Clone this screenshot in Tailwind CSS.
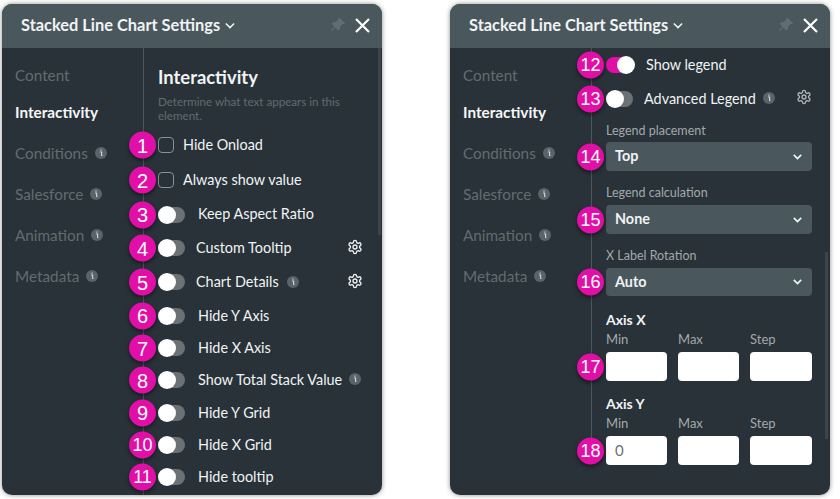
<!DOCTYPE html>
<html lang="en">
<head>
<meta charset="UTF-8">
<title>Stacked Line Chart Settings</title>
<script src="https://cdn.jsdelivr.net/npm/@tailwindcss/browser@4"></script>
</head>
<body class="bg-white font-['Lato',sans-serif] text-[14.400px] text-[#f1f3f4] overflow-hidden">
<div class="w-[840px] h-[499px] flex pl-[2px] pt-[4px] gap-[68px]">

  <!-- Left panel -->
  <div class="relative w-[380px] h-[491px] rounded-[10px] bg-[#283238] shadow-[0_0_5px_rgba(0,0,0,0.45)] flex flex-col">
    <div class="h-[44px] shrink-0 rounded-t-[10px] bg-[#4a575d] flex items-center pl-[19px] pr-[12px] pb-[2px]">
      <span class="text-[16.400px] font-bold">Stacked Line Chart Settings</span>
      <svg class="w-[10px] h-[7px] ml-[5px]" viewBox="0 0 12 8" fill="none" stroke="#f1f3f4" stroke-width="1.8"><path d="M1 1.5l5 5 5-5"/></svg>
      <svg class="w-[15px] h-[15px] ml-auto" viewBox="0 0 16 16" fill="#636e73"><path d="M9.8.6a.7.7 0 0 1 1.1-.2l4.7 4.7a.7.7 0 0 1-.2 1.1c-.6.3-1.2.3-1.6.2l-.3-.1-3 3c.1.4.2.9.1 1.5-.1.8-.5 1.6-1.1 2.2a.7.7 0 0 1-1 0L5.700 10l-3.500 3.500-1.200.5.500-1.200L5 9.300 2.200 6.500a.7.7 0 0 1 0-1c.6-.6 1.400-1 2.200-1.100.6-.1 1.100 0 1.500.1l3-3-.1-.3c-.1-.4-.1-1 .2-1.600z"/></svg>
      <svg class="w-[15px] h-[15px] ml-[10px]" viewBox="0 0 15 15" fill="none" stroke="#ffffff" stroke-width="2.2"><path d="M1 1l13 13M14 1L1 14"/></svg>
    </div>
    <div class="flex-1 flex min-h-0">
      <nav class="w-[142px] shrink-0 border-r border-[#4c565b] pl-[13px] text-[15.300px] text-[#626c71]">
        <div class="h-[24px] mt-[15px] flex items-center">Content</div>
        <div class="h-[24px] mt-[13px] flex items-center font-bold text-[#f7f8f8]">Interactivity</div>
        <div class="h-[24px] mt-[17px] flex items-center gap-[7px]">Conditions
          <svg class="w-[12px] h-[12px]" viewBox="0 0 12 12"><circle cx="6" cy="6" r="6" fill="#59646a"/><path d="M5 5h1.600v3.500H7.400M6 2.500v1.200" stroke="#c9cfd2" stroke-width="1.200" fill="none"/></svg>
        </div>
        <div class="h-[24px] mt-[17px] flex items-center gap-[7px]">Salesforce
          <svg class="w-[12px] h-[12px]" viewBox="0 0 12 12"><circle cx="6" cy="6" r="6" fill="#59646a"/><path d="M5 5h1.600v3.500H7.400M6 2.500v1.200" stroke="#c9cfd2" stroke-width="1.200" fill="none"/></svg>
        </div>
        <div class="h-[24px] mt-[17px] flex items-center gap-[7px]">Animation
          <svg class="w-[12px] h-[12px]" viewBox="0 0 12 12"><circle cx="6" cy="6" r="6" fill="#59646a"/><path d="M5 5h1.600v3.500H7.400M6 2.500v1.200" stroke="#c9cfd2" stroke-width="1.200" fill="none"/></svg>
        </div>
        <div class="h-[24px] mt-[17px] flex items-center gap-[7px]">Metadata
          <svg class="w-[12px] h-[12px]" viewBox="0 0 12 12"><circle cx="6" cy="6" r="6" fill="#59646a"/><path d="M5 5h1.600v3.500H7.400M6 2.500v1.200" stroke="#c9cfd2" stroke-width="1.200" fill="none"/></svg>
        </div>
      </nav>
      <div class="flex-1 pl-[14px]">
        <h2 class="text-[18.400px] font-bold leading-[24px] mt-[17px]">Interactivity</h2>
        <p class="text-[11.600px] leading-[14px] text-[#626c71] mt-[6px] w-[200px]">Determine what text appears in this element.</p>
        <div class="mt-[5px]">
          <div class="relative h-[34px] flex items-center">
            <span class="absolute left-[-29px] top-1/2 -translate-y-1/2 w-[27px] h-[27px] rounded-full bg-[#e10fa8] shadow-[0_2px_4px_rgba(0,0,0,0.5)] flex items-center justify-center font-['Liberation_Sans',sans-serif] text-[20px] text-white">1</span>
            <span class="w-[16px] h-[16px] rounded-[4px] border border-[#8b9195]"></span>
            <span class="ml-[9px] mb-[1px]">Hide Onload</span>
          </div>
          <div class="relative h-[36px] flex items-center">
            <span class="absolute left-[-29px] top-1/2 -translate-y-1/2 w-[27px] h-[27px] rounded-full bg-[#e10fa8] shadow-[0_2px_4px_rgba(0,0,0,0.5)] flex items-center justify-center font-['Liberation_Sans',sans-serif] text-[20px] text-white">2</span>
            <span class="w-[16px] h-[16px] rounded-[4px] border border-[#8b9195]"></span>
            <span class="ml-[9px] mb-[1px]">Always show value</span>
          </div>
          <div class="relative h-[33px] flex items-center">
            <span class="absolute left-[-29px] top-1/2 -translate-y-1/2 w-[27px] h-[27px] rounded-full bg-[#e10fa8] shadow-[0_2px_4px_rgba(0,0,0,0.5)] flex items-center justify-center font-['Liberation_Sans',sans-serif] text-[20px] text-white">3</span>
            <span class="w-[27px] h-[16px] rounded-full bg-[#6b7175] flex items-center"><span class="w-[18px] h-[18px] rounded-full bg-white"></span></span>
            <span class="ml-[13px] mb-[1px]">Keep Aspect Ratio</span>
          </div>
          <div class="relative h-[34px] flex items-center">
            <span class="absolute left-[-29px] top-1/2 -translate-y-1/2 w-[27px] h-[27px] rounded-full bg-[#e10fa8] shadow-[0_2px_4px_rgba(0,0,0,0.5)] flex items-center justify-center font-['Liberation_Sans',sans-serif] text-[20px] text-white">4</span>
            <span class="w-[27px] h-[16px] rounded-full bg-[#6b7175] flex items-center"><span class="w-[18px] h-[18px] rounded-full bg-white"></span></span>
            <span class="ml-[11px] mb-[1px]">Custom Tooltip</span>
            <svg class="w-[16px] h-[16px] ml-auto mr-[15px] -mt-[2px]" viewBox="0 0 24 24" fill="none" stroke="#f1f3f4" stroke-width="2"><path d="M12.220 2h-.440a2 2 0 0 0-2 2v.180a2 2 0 0 1-1 1.730l-.430.250a2 2 0 0 1-2 0l-.150-.080a2 2 0 0 0-2.730.730l-.220.380a2 2 0 0 0 .730 2.730l.150.100a2 2 0 0 1 1 1.720v.510a2 2 0 0 1-1 1.740l-.150.090a2 2 0 0 0-.730 2.730l.220.380a2 2 0 0 0 2.730.730l.150-.080a2 2 0 0 1 2 0l.430.250a2 2 0 0 1 1 1.730V20a2 2 0 0 0 2 2h.440a2 2 0 0 0 2-2v-.180a2 2 0 0 1 1-1.730l.430-.250a2 2 0 0 1 2 0l.150.080a2 2 0 0 0 2.730-.730l.220-.390a2 2 0 0 0-.730-2.730l-.150-.080a2 2 0 0 1-1-1.740v-.500a2 2 0 0 1 1-1.740l.150-.090a2 2 0 0 0 .730-2.730l-.220-.380a2 2 0 0 0-2.730-.730l-.150.080a2 2 0 0 1-2 0l-.430-.250a2 2 0 0 1-1-1.730V4a2 2 0 0 0-2-2z"/><circle cx="12" cy="12" r="3"/></svg>
          </div>
          <div class="relative h-[34px] flex items-center">
            <span class="absolute left-[-29px] top-1/2 -translate-y-1/2 w-[27px] h-[27px] rounded-full bg-[#e10fa8] shadow-[0_2px_4px_rgba(0,0,0,0.5)] flex items-center justify-center font-['Liberation_Sans',sans-serif] text-[20px] text-white">5</span>
            <span class="w-[27px] h-[16px] rounded-full bg-[#6b7175] flex items-center"><span class="w-[18px] h-[18px] rounded-full bg-white"></span></span>
            <span class="ml-[11px] mb-[1px]">Chart Details</span>
            <svg class="w-[12px] h-[12px] ml-[8px] -mt-[1px]" viewBox="0 0 12 12"><circle cx="6" cy="6" r="6" fill="#59646a"/><path d="M5 5h1.600v3.500H7.400M6 2.500v1.200" stroke="#c9cfd2" stroke-width="1.200" fill="none"/></svg>
            <svg class="w-[16px] h-[16px] ml-auto mr-[15px] -mt-[2px]" viewBox="0 0 24 24" fill="none" stroke="#f1f3f4" stroke-width="2"><path d="M12.220 2h-.440a2 2 0 0 0-2 2v.180a2 2 0 0 1-1 1.730l-.430.250a2 2 0 0 1-2 0l-.150-.080a2 2 0 0 0-2.730.730l-.220.380a2 2 0 0 0 .730 2.730l.150.100a2 2 0 0 1 1 1.720v.510a2 2 0 0 1-1 1.740l-.150.090a2 2 0 0 0-.730 2.730l.220.380a2 2 0 0 0 2.730.730l.150-.080a2 2 0 0 1 2 0l.430.250a2 2 0 0 1 1 1.730V20a2 2 0 0 0 2 2h.440a2 2 0 0 0 2-2v-.180a2 2 0 0 1 1-1.730l.430-.250a2 2 0 0 1 2 0l.150.080a2 2 0 0 0 2.730-.730l.220-.390a2 2 0 0 0-.730-2.730l-.150-.080a2 2 0 0 1-1-1.740v-.500a2 2 0 0 1 1-1.740l.150-.090a2 2 0 0 0 .730-2.730l-.220-.380a2 2 0 0 0-2.730-.730l-.150.080a2 2 0 0 1-2 0l-.430-.250a2 2 0 0 1-1-1.730V4a2 2 0 0 0-2-2z"/><circle cx="12" cy="12" r="3"/></svg>
          </div>
          <div class="relative h-[33px] flex items-center">
            <span class="absolute left-[-29px] top-1/2 -translate-y-1/2 w-[27px] h-[27px] rounded-full bg-[#e10fa8] shadow-[0_2px_4px_rgba(0,0,0,0.5)] flex items-center justify-center font-['Liberation_Sans',sans-serif] text-[20px] text-white">6</span>
            <span class="w-[27px] h-[16px] rounded-full bg-[#6b7175] flex items-center"><span class="w-[18px] h-[18px] rounded-full bg-white"></span></span>
            <span class="ml-[13px]">Hide Y Axis</span>
          </div>
          <div class="relative h-[32px] flex items-center">
            <span class="absolute left-[-29px] top-1/2 -translate-y-1/2 w-[27px] h-[27px] rounded-full bg-[#e10fa8] shadow-[0_2px_4px_rgba(0,0,0,0.5)] flex items-center justify-center font-['Liberation_Sans',sans-serif] text-[20px] text-white">7</span>
            <span class="w-[27px] h-[16px] rounded-full bg-[#6b7175] flex items-center"><span class="w-[18px] h-[18px] rounded-full bg-white"></span></span>
            <span class="ml-[13px]">Hide X Axis</span>
          </div>
          <div class="relative h-[32px] flex items-center">
            <span class="absolute left-[-29px] top-1/2 -translate-y-1/2 w-[27px] h-[27px] rounded-full bg-[#e10fa8] shadow-[0_2px_4px_rgba(0,0,0,0.5)] flex items-center justify-center font-['Liberation_Sans',sans-serif] text-[20px] text-white">8</span>
            <span class="w-[27px] h-[16px] rounded-full bg-[#6b7175] flex items-center"><span class="w-[18px] h-[18px] rounded-full bg-white"></span></span>
            <span class="ml-[13px]">Show Total Stack Value</span>
            <svg class="w-[12px] h-[12px] ml-[7px] -mt-[2px]" viewBox="0 0 12 12"><circle cx="6" cy="6" r="6" fill="#59646a"/><path d="M5 5h1.600v3.500H7.400M6 2.500v1.200" stroke="#c9cfd2" stroke-width="1.200" fill="none"/></svg>
          </div>
          <div class="relative h-[33px] flex items-center">
            <span class="absolute left-[-29px] top-1/2 -translate-y-1/2 w-[27px] h-[27px] rounded-full bg-[#e10fa8] shadow-[0_2px_4px_rgba(0,0,0,0.5)] flex items-center justify-center font-['Liberation_Sans',sans-serif] text-[20px] text-white">9</span>
            <span class="w-[27px] h-[16px] rounded-full bg-[#6b7175] flex items-center"><span class="w-[18px] h-[18px] rounded-full bg-white"></span></span>
            <span class="ml-[13px]">Hide Y Grid</span>
          </div>
          <div class="relative h-[32px] flex items-center">
            <span class="absolute left-[-29px] top-1/2 -translate-y-1/2 w-[27px] h-[27px] rounded-full bg-[#e10fa8] shadow-[0_2px_4px_rgba(0,0,0,0.5)] flex items-center justify-center font-['Liberation_Sans',sans-serif] text-[18px] text-white">10</span>
            <span class="w-[27px] h-[16px] rounded-full bg-[#6b7175] flex items-center"><span class="w-[18px] h-[18px] rounded-full bg-white"></span></span>
            <span class="ml-[13px]">Hide X Grid</span>
          </div>
          <div class="relative h-[32px] flex items-center">
            <span class="absolute left-[-29px] top-1/2 -translate-y-1/2 w-[27px] h-[27px] rounded-full bg-[#e10fa8] shadow-[0_2px_4px_rgba(0,0,0,0.5)] flex items-center justify-center font-['Liberation_Sans',sans-serif] text-[18px] text-white">11</span>
            <span class="w-[27px] h-[16px] rounded-full bg-[#6b7175] flex items-center"><span class="w-[18px] h-[18px] rounded-full bg-white"></span></span>
            <span class="ml-[13px]">Hide tooltip</span>
          </div>
        </div>
      </div>
      <div class="w-[3px] h-[187px] mr-[1px] bg-[#3b454b]"></div>
    </div>
  </div>

  <!-- Right panel -->
  <div class="relative w-[380px] h-[491px] rounded-[10px] bg-[#283238] shadow-[0_0_5px_rgba(0,0,0,0.45)] flex flex-col">
    <div class="h-[44px] shrink-0 rounded-t-[10px] bg-[#4a575d] flex items-center pl-[19px] pr-[12px] pb-[2px]">
      <span class="text-[16.400px] font-bold">Stacked Line Chart Settings</span>
      <svg class="w-[10px] h-[7px] ml-[5px]" viewBox="0 0 12 8" fill="none" stroke="#f1f3f4" stroke-width="1.8"><path d="M1 1.5l5 5 5-5"/></svg>
      <svg class="w-[15px] h-[15px] ml-auto" viewBox="0 0 16 16" fill="#636e73"><path d="M9.8.6a.7.7 0 0 1 1.1-.2l4.7 4.7a.7.7 0 0 1-.2 1.1c-.6.3-1.2.3-1.6.2l-.3-.1-3 3c.1.4.2.9.1 1.5-.1.8-.5 1.6-1.1 2.2a.7.7 0 0 1-1 0L5.700 10l-3.500 3.500-1.200.5.500-1.200L5 9.300 2.200 6.500a.7.7 0 0 1 0-1c.6-.6 1.400-1 2.200-1.100.6-.1 1.100 0 1.500.1l3-3-.1-.3c-.1-.4-.1-1 .2-1.600z"/></svg>
      <svg class="w-[15px] h-[15px] ml-[10px]" viewBox="0 0 15 15" fill="none" stroke="#ffffff" stroke-width="2.2"><path d="M1 1l13 13M14 1L1 14"/></svg>
    </div>
    <div class="flex-1 flex min-h-0">
      <nav class="w-[142px] h-[402px] shrink-0 border-r border-[#4c565b] pl-[13px] text-[15.300px] text-[#626c71]">
        <div class="h-[24px] mt-[15px] flex items-center">Content</div>
        <div class="h-[24px] mt-[13px] flex items-center font-bold text-[#f7f8f8]">Interactivity</div>
        <div class="h-[24px] mt-[17px] flex items-center gap-[7px]">Conditions
          <svg class="w-[12px] h-[12px]" viewBox="0 0 12 12"><circle cx="6" cy="6" r="6" fill="#59646a"/><path d="M5 5h1.600v3.500H7.400M6 2.500v1.200" stroke="#c9cfd2" stroke-width="1.200" fill="none"/></svg>
        </div>
        <div class="h-[24px] mt-[17px] flex items-center gap-[7px]">Salesforce
          <svg class="w-[12px] h-[12px]" viewBox="0 0 12 12"><circle cx="6" cy="6" r="6" fill="#59646a"/><path d="M5 5h1.600v3.500H7.400M6 2.500v1.200" stroke="#c9cfd2" stroke-width="1.200" fill="none"/></svg>
        </div>
        <div class="h-[24px] mt-[17px] flex items-center gap-[7px]">Animation
          <svg class="w-[12px] h-[12px]" viewBox="0 0 12 12"><circle cx="6" cy="6" r="6" fill="#59646a"/><path d="M5 5h1.600v3.500H7.400M6 2.500v1.200" stroke="#c9cfd2" stroke-width="1.200" fill="none"/></svg>
        </div>
        <div class="h-[24px] mt-[17px] flex items-center gap-[7px]">Metadata
          <svg class="w-[12px] h-[12px]" viewBox="0 0 12 12"><circle cx="6" cy="6" r="6" fill="#59646a"/><path d="M5 5h1.600v3.500H7.400M6 2.500v1.200" stroke="#c9cfd2" stroke-width="1.200" fill="none"/></svg>
        </div>
      </nav>
      <div class="w-[206px] ml-[14px] shrink-0">
        <div class="relative h-[34px] flex items-center">
          <span class="absolute left-[-29px] top-1/2 -translate-y-1/2 w-[27px] h-[27px] rounded-full bg-[#e10fa8] shadow-[0_2px_4px_rgba(0,0,0,0.5)] flex items-center justify-center font-['Liberation_Sans',sans-serif] text-[18px] text-white">12</span>
          <span class="w-[27px] h-[16px] rounded-full bg-[#e10fa8] flex items-center justify-end"><span class="w-[18px] h-[18px] -mr-[2px] rounded-full bg-white"></span></span>
          <span class="ml-[13px]">Show legend</span>
        </div>
        <div class="relative h-[34px] flex items-center">
          <span class="absolute left-[-29px] top-1/2 -translate-y-1/2 w-[27px] h-[27px] rounded-full bg-[#e10fa8] shadow-[0_2px_4px_rgba(0,0,0,0.5)] flex items-center justify-center font-['Liberation_Sans',sans-serif] text-[18px] text-white">13</span>
          <span class="w-[27px] h-[16px] rounded-full bg-[#6b7175] flex items-center"><span class="w-[18px] h-[18px] rounded-full bg-white"></span></span>
          <span class="ml-[11px]">Advanced Legend</span>
          <svg class="w-[12px] h-[12px] ml-[7px] -mt-[2px]" viewBox="0 0 12 12"><circle cx="6" cy="6" r="6" fill="#59646a"/><path d="M5 5h1.600v3.500H7.400M6 2.500v1.200" stroke="#c9cfd2" stroke-width="1.200" fill="none"/></svg>
          <svg class="w-[16px] h-[16px] ml-auto -mt-[4px]" viewBox="0 0 24 24" fill="none" stroke="#aeb4b7" stroke-width="2"><path d="M12.220 2h-.440a2 2 0 0 0-2 2v.180a2 2 0 0 1-1 1.730l-.430.250a2 2 0 0 1-2 0l-.150-.080a2 2 0 0 0-2.730.730l-.220.380a2 2 0 0 0 .730 2.730l.150.100a2 2 0 0 1 1 1.720v.510a2 2 0 0 1-1 1.740l-.150.090a2 2 0 0 0-.730 2.730l.220.380a2 2 0 0 0 2.730.730l.150-.080a2 2 0 0 1 2 0l.430.250a2 2 0 0 1 1 1.730V20a2 2 0 0 0 2 2h.440a2 2 0 0 0 2-2v-.180a2 2 0 0 1 1-1.730l.430-.250a2 2 0 0 1 2 0l.150.080a2 2 0 0 0 2.730-.730l.220-.390a2 2 0 0 0-.730-2.730l-.150-.080a2 2 0 0 1-1-1.740v-.500a2 2 0 0 1 1-1.740l.150-.090a2 2 0 0 0 .730-2.730l-.220-.380a2 2 0 0 0-2.730-.730l-.150.080a2 2 0 0 1-2 0l-.430-.250a2 2 0 0 1-1-1.730V4a2 2 0 0 0-2-2z"/><circle cx="12" cy="12" r="3"/></svg>
        </div>
        <div class="text-[12.500px] leading-[16px] text-[#a3a9ac] mt-[7px]">Legend placement</div>
        <div class="relative h-[29px] mt-[3px] rounded-[4px] bg-[#4a575d] flex items-center pl-[9px] pr-[10px] font-bold">
          <span class="absolute left-[-29px] top-1/2 -translate-y-1/2 w-[27px] h-[27px] rounded-full bg-[#e10fa8] shadow-[0_2px_4px_rgba(0,0,0,0.5)] flex items-center justify-center font-['Liberation_Sans',sans-serif] font-normal text-[18px] text-white">14</span>
          <span class="mb-[2px]">Top</span>
          <svg class="w-[9px] h-[6px] ml-auto" viewBox="0 0 9 6" fill="none" stroke="#f1f3f4" stroke-width="1.700"><path d="M.8.8l3.700 3.700L8.200.8"/></svg>
        </div>
        <div class="text-[12.500px] leading-[16px] text-[#a3a9ac] mt-[14px]">Legend calculation</div>
        <div class="relative h-[29px] mt-[4px] rounded-[4px] bg-[#4a575d] flex items-center pl-[9px] pr-[10px] font-bold">
          <span class="absolute left-[-29px] top-1/2 -translate-y-1/2 w-[27px] h-[27px] rounded-full bg-[#e10fa8] shadow-[0_2px_4px_rgba(0,0,0,0.5)] flex items-center justify-center font-['Liberation_Sans',sans-serif] font-normal text-[18px] text-white">15</span>
          <span class="mb-[2px]">None</span>
          <svg class="w-[9px] h-[6px] ml-auto" viewBox="0 0 9 6" fill="none" stroke="#f1f3f4" stroke-width="1.700"><path d="M.8.8l3.700 3.700L8.200.8"/></svg>
        </div>
        <div class="text-[12.500px] leading-[16px] text-[#a3a9ac] mt-[14px]">X Label Rotation</div>
        <div class="relative h-[28px] mt-[4px] rounded-[4px] bg-[#4a575d] flex items-center pl-[9px] pr-[10px] font-bold">
          <span class="absolute left-[-29px] top-1/2 -translate-y-1/2 w-[27px] h-[27px] rounded-full bg-[#e10fa8] shadow-[0_2px_4px_rgba(0,0,0,0.5)] flex items-center justify-center font-['Liberation_Sans',sans-serif] font-normal text-[18px] text-white">16</span>
          <span>Auto</span>
          <svg class="w-[9px] h-[6px] ml-auto" viewBox="0 0 9 6" fill="none" stroke="#f1f3f4" stroke-width="1.700"><path d="M.8.8l3.700 3.700L8.200.8"/></svg>
        </div>
        <div class="text-[14px] leading-[18px] font-bold mt-[15px]">Axis X</div>
        <div class="grid grid-cols-[61px_61px_62px] gap-x-[11px] text-[13px] leading-[16px] text-[#a3a9ac] mt-[2px]"><span>Min</span><span>Max</span><span>Step</span></div>
        <div class="relative grid grid-cols-[61px_61px_62px] gap-x-[11px] mt-[5px]">
          <span class="absolute left-[-29px] top-1/2 -translate-y-1/2 w-[27px] h-[27px] rounded-full bg-[#e10fa8] shadow-[0_2px_4px_rgba(0,0,0,0.5)] flex items-center justify-center font-['Liberation_Sans',sans-serif] text-[18px] text-white">17</span>
          <div class="h-[29px] rounded-[4px] bg-white"></div><div class="h-[29px] rounded-[4px] bg-white"></div><div class="h-[29px] rounded-[4px] bg-white"></div>
        </div>
        <div class="text-[14px] leading-[18px] font-bold mt-[14px]">Axis Y</div>
        <div class="grid grid-cols-[61px_61px_62px] gap-x-[11px] text-[13px] leading-[16px] text-[#a3a9ac] mt-[2px]"><span>Min</span><span>Max</span><span>Step</span></div>
        <div class="relative grid grid-cols-[61px_61px_62px] gap-x-[11px] mt-[5px]">
          <span class="absolute left-[-29px] top-1/2 -translate-y-1/2 w-[27px] h-[27px] rounded-full bg-[#e10fa8] shadow-[0_2px_4px_rgba(0,0,0,0.5)] flex items-center justify-center font-['Liberation_Sans',sans-serif] text-[18px] text-white">18</span>
          <div class="h-[29px] rounded-[4px] bg-white pl-[9px] flex items-center text-[15px] text-[#6b7175]">0</div><div class="h-[29px] rounded-[4px] bg-white"></div><div class="h-[29px] rounded-[4px] bg-white"></div>
        </div>
      </div>
      <div class="w-[3px] h-[187px] mt-[204px] ml-[13px] bg-[#3b454b]"></div>
    </div>
  </div>

</div>
</body>
</html>
